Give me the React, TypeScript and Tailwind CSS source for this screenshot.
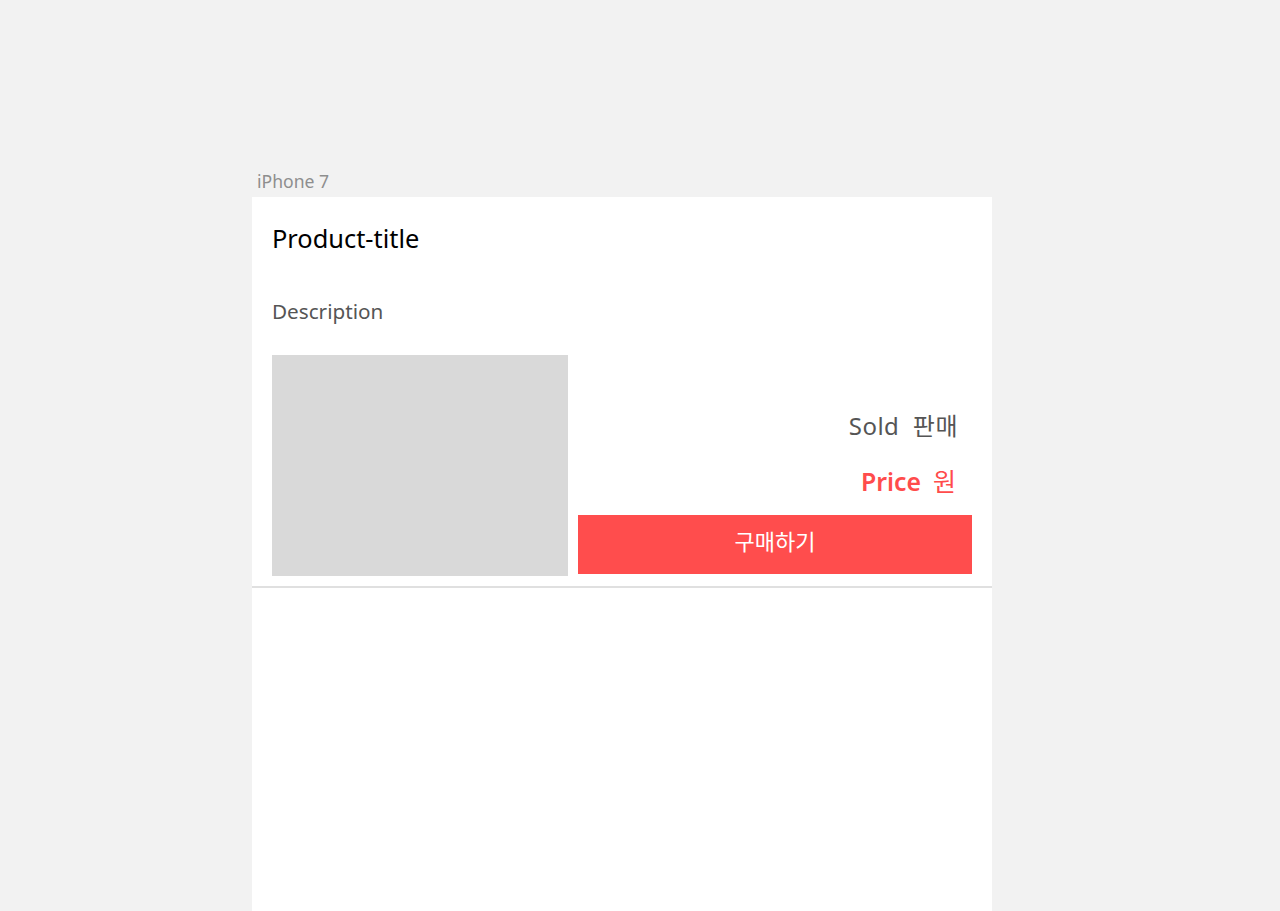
import React from "react";

export default function App() {
  const font = { fontFamily: '"Noto Sans", "Noto Sans CJK KR", sans-serif' };
  return (
    <div className="min-h-[911px] w-full bg-[#f2f2f2] overflow-hidden" style={font}>
      <div className="ml-[252px] w-[740px] pt-[168px]">
        <div className="pl-[5px] h-[29px] text-[17.6px] leading-[26px] text-[#8e8e8e]">iPhone 7</div>
        <div className="bg-white h-[714px] flex flex-col">
          <div className="px-[20px] pt-[25px]">
            <div className="text-[25.4px] leading-[32px] text-black">Product-title</div>
            <div className="mt-[43px] text-[20.7px] leading-[28px] text-[#555]">Description</div>
            <div className="mt-[30px] flex gap-[10px]">
              <div className="w-[296px] h-[221px] bg-[#d9d9d9]" />
              <div className="flex-1 flex flex-col">
                <div className="flex-1 flex flex-col items-end justify-end pr-[14px] pb-[18px]">
                  <div className="text-[24px] leading-[32px] text-[#555] tracking-[0.5px]">Sold&nbsp; 판매</div>
                  <div className="mt-[23px] flex items-baseline text-[24px] leading-[32px] text-[#ff4c4c] pr-[2px]">
                    <span className="font-semibold text-[24.8px] mr-[12px]">Price</span>
                    <span className="text-[25px]">원</span>
                  </div>
                </div>
                <div className="h-[59px] mb-[2px] pb-[6px] bg-[#ff4d4d] flex items-center justify-center text-white text-[22px]">
                  구매하기
                </div>
              </div>
            </div>
          </div>
          <div className="mt-[10px] h-[2px] bg-[#e0e0e0]" />
        </div>
      </div>
    </div>
  );
}
